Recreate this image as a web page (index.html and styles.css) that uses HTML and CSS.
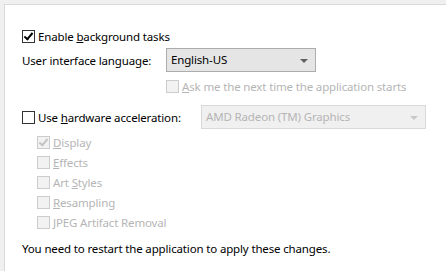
FILE: index.html
```html
<!DOCTYPE html>
<html lang="en">
<head>
    <meta charset="UTF-8">
    <title>Options</title>
    <link rel="stylesheet" href="styles.css">
</head>
<body>
    <div class="panel">
        <div class="row row-bg">
            <span class="box checked"></span>
            <span class="text">Enable <u>b</u>ackground tasks</span>
        </div>
        <div class="row row-lang">
            <span class="label">User interface language:</span>
            <div class="combo">English-US<span class="arrow"></span></div>
        </div>
        <div class="row row-ask disabled">
            <span class="box"></span>
            <span class="text"><u>A</u>sk me the next time the application starts</span>
        </div>
        <div class="row row-hw">
            <span class="box"></span>
            <span class="text hw-label">Use <u>h</u>ardware acceleration:</span>
            <div class="combo combo-off">AMD Radeon (TM) Graphics<span class="arrow"></span></div>
        </div>
        <div class="subs disabled">
            <div class="row"><span class="box checked"></span><span class="text"><u>D</u>isplay</span></div>
            <div class="row"><span class="box"></span><span class="text"><u>E</u>ffects</span></div>
            <div class="row"><span class="box"></span><span class="text">Art <u>S</u>tyles</span></div>
            <div class="row"><span class="box"></span><span class="text"><u>R</u>esampling</span></div>
            <div class="row"><span class="box"></span><span class="text"><u>J</u>PEG Artifact Removal</span></div>
        </div>
        <p class="note">You need to restart the application to apply these changes.</p>
    </div>
</body>
</html>
```

FILE: styles.css
```css
body {
    margin: 0;
    background: #f0f0f0;
    font-family: 'Noto Sans', sans-serif;
    font-size: 11.5px;
    letter-spacing: -0.15px;
    color: #000;
}
.panel {
    margin: 4px 0 0 4px;
    height: 267px;
    box-sizing: border-box;
    background: #fff;
    border-top: 1px solid #dadada;
    border-left: 1px solid #dadada;
    padding: 21px 0 0 17px;
}
.row {
    display: flex;
    align-items: center;
    height: 20px;
}
.box {
    position: relative;
    width: 13px;
    height: 13px;
    box-sizing: border-box;
    border: 1px solid #333;
    background: #fff;
    margin-right: 3px;
    flex: none;
}
.box.checked::after {
    content: '';
    position: absolute;
    left: 3px;
    top: 0px;
    width: 3px;
    height: 7px;
    border-right: 2px solid #000;
    border-bottom: 2px solid #000;
    transform: rotate(40deg);
}
.disabled {
    color: #b5b5b5;
}
.disabled .box {
    border-color: #cccccc;
    background: #f2f2f2;
}
.disabled .box.checked::after {
    border-color: #c4c4c4;
}
.row-lang {
    margin-top: 2px;
    height: 24px;
}
.label {
    width: 144px;
}
.combo {
    position: relative;
    width: 150px;
    height: 24px;
    box-sizing: border-box;
    border: 1px solid #adadad;
    background: #e5e5e5;
    padding-left: 4px;
    line-height: 22px;
}
.arrow {
    position: absolute;
    right: 7px;
    top: 10px;
    border-left: 4px solid transparent;
    border-right: 4px solid transparent;
    border-top: 4px solid #606060;
}
.row-ask {
    margin-top: 4px;
    padding-left: 144px;
}
.row-hw {
    margin-top: 9px;
    height: 24px;
}
.hw-label {
    width: 163px;
}
.combo-off {
    width: 225px;
    border-color: #d9d9d9;
    background: #f0f0f0;
    color: #b5b5b5;
}
.combo-off .arrow {
    border-top-color: #c8c8c8;
}
.subs {
    margin-top: 3px;
    padding-left: 15px;
}
.note {
    margin: 7px 0 0;
    line-height: 20px;
}
```
